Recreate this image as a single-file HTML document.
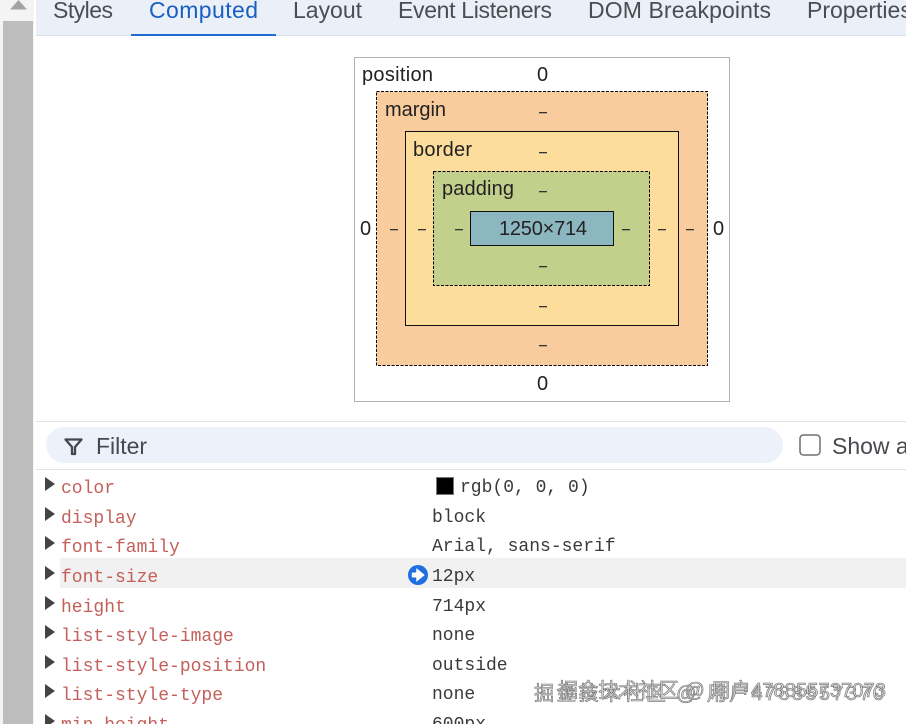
<!DOCTYPE html>
<html><head><meta charset="utf-8">
<style>
html,body{margin:0;padding:0;background:#fff;width:906px;height:724px;overflow:hidden}
svg{display:block}
.s{font-family:"Liberation Sans",sans-serif}
.tab{font-size:23px;fill:#4a4d52}
.box{font-size:20px;fill:#222}
.m{font-family:"Liberation Mono",monospace;font-size:18px}
.k{fill:#c4605a}
.v{fill:#3a3a3a}
.w{font-family:"Liberation Sans","Noto Sans CJK SC",sans-serif;font-size:20px;fill:#d8d8d8;stroke:#707070;stroke-width:.6}
</style></head><body>
<svg width="906" height="724" viewBox="0 0 906 724" xmlns="http://www.w3.org/2000/svg">
<rect width="906" height="724" fill="#fff"/>
<!-- scrollbar -->
<rect x="0" y="0" width="34" height="724" fill="#f4f4f4"/>
<rect x="3" y="21" width="30" height="703" fill="#bdbdbd"/>
<path d="M10 9.500 L18.500 0 L27 9.500Z" fill="#a3a3a3"/>
<rect x="34" y="0" width="2" height="724" fill="#fff"/>
<!-- tabs -->
<rect x="36" y="0" width="870" height="35" fill="#ebf0f8"/>
<rect x="36" y="35" width="870" height="1" fill="#d5dfee"/>
<rect x="131" y="34" width="145" height="2" fill="#1f69d3"/>
<g class="s tab">
<text x="53" y="18" textLength="60">Styles</text>
<text x="149" y="18" textLength="109" style="fill:#1a5fc0">Computed</text>
<text x="293" y="18" textLength="69">Layout</text>
<text x="398" y="18" textLength="154">Event Listeners</text>
<text x="588" y="18" textLength="183">DOM Breakpoints</text>
<text x="807" y="18">Properties</text>
</g>
<!-- box model -->
<rect x="354.500" y="57.500" width="375" height="344" fill="#fff" stroke="#666" stroke-dasharray="1 1"/>
<rect x="376.500" y="91.500" width="331" height="274" fill="#f9cc9d" stroke="#000" stroke-dasharray="3 1.500"/>
<rect x="405.500" y="131.500" width="273" height="194" fill="#fddd9b" stroke="#111"/>
<rect x="433.500" y="171.500" width="216" height="114" fill="#c3d08b" stroke="#000" stroke-dasharray="3 1.500"/>
<rect x="470.500" y="211.500" width="143" height="34" fill="#8cb6c0" stroke="#111"/>
<g class="s box">
<text x="362" y="81" textLength="71">position</text>
<text x="385" y="116" textLength="61">margin</text>
<text x="413" y="156" textLength="59">border</text>
<text x="442" y="195" textLength="72">padding</text>
<text x="499" y="235" textLength="88">1250×714</text>
<text x="537" y="81" textLength="11">0</text>
<text x="537" y="390" textLength="11">0</text>
<text x="360" y="235" textLength="11">0</text>
<text x="713" y="235" textLength="11">0</text>
</g>
<g fill="#333">
<rect x="539" y="112" width="8" height="1.300"/>
<rect x="539" y="152" width="8" height="1.300"/>
<rect x="539" y="191" width="8" height="1.300"/>
<rect x="539" y="266" width="8" height="1.300"/>
<rect x="539" y="306" width="8" height="1.300"/>
<rect x="539" y="345" width="8" height="1.300"/>
<rect x="390" y="229" width="8" height="1.300"/>
<rect x="418" y="229" width="8" height="1.300"/>
<rect x="455" y="229" width="8" height="1.300"/>
<rect x="622" y="229" width="8" height="1.300"/>
<rect x="658" y="229" width="8" height="1.300"/>
<rect x="686" y="229" width="8" height="1.300"/>
</g>
<!-- filter bar -->
<rect x="36" y="421" width="870" height="1" fill="#e0e3e8"/>
<rect x="46" y="427" width="737" height="36" rx="18" fill="#edf2fa"/>
<rect x="36" y="469" width="870" height="1" fill="#e0e3e8"/>
<path d="M65.500 439.500 H81.500 L75 447 V454 H72 V447 Z" fill="none" stroke="#43474c" stroke-width="2.300" stroke-linejoin="round"/>
<text class="s" x="96" y="454" font-size="23" fill="#46494e" textLength="51">Filter</text>
<rect x="800" y="435" width="20" height="20" rx="3.500" fill="#fff" stroke="#6d7074" stroke-width="1.500"/>
<text class="s" x="832" y="454" font-size="23" fill="#46494e">Show a</text>
<!-- highlighted row -->
<rect x="60" y="558" width="846" height="30" fill="#f1f1f1"/>
<circle cx="418" cy="575" r="10" fill="#1f6fe0"/>
<path d="M412 572.800 H416.500 V568.500 L424.500 575 L416.500 581.500 V577.200 H412 Z" fill="#fff" stroke="#fff" stroke-width=".5" stroke-linejoin="round"/>
<rect x="436.500" y="477.500" width="17" height="17" fill="#000" stroke="#777"/>
<!-- triangles -->
<g fill="#444">
<path d="M45 477 L55 484 L45 491Z"/>
<path d="M45 507 L55 514 L45 521Z"/>
<path d="M45 536 L55 543 L45 550Z"/>
<path d="M45 566 L55 573 L45 580Z"/>
<path d="M45 596 L55 603 L45 610Z"/>
<path d="M45 625 L55 632 L45 639Z"/>
<path d="M45 655 L55 662 L45 669Z"/>
<path d="M45 684 L55 691 L45 698Z"/>
<path d="M45 714 L55 721 L45 728Z"/>
</g>
<!-- rows -->
<g class="m k">
<text x="61" y="493">color</text>
<text x="61" y="523">display</text>
<text x="61" y="552">font-family</text>
<text x="61" y="582">font-size</text>
<text x="61" y="612">height</text>
<text x="61" y="641">list-style-image</text>
<text x="61" y="671">list-style-position</text>
<text x="61" y="700">list-style-type</text>
<text x="61" y="730">min-height</text>
</g>
<g class="m v">
<text x="460" y="492">rgb(0, 0, 0)</text>
<text x="432" y="522">block</text>
<text x="432" y="551">Arial, sans-serif</text>
<text x="432" y="581">12px</text>
<text x="432" y="611">714px</text>
<text x="432" y="640">none</text>
<text x="432" y="670">outside</text>
<text x="432" y="699">none</text>
<text x="432" y="729">600px</text>
</g>
<!-- watermark -->
<g class="w">
<text x="534" y="700" textLength="350">掘金技术社区 @ 用户4788557370</text>
<text x="558" y="697" textLength="328">掘金技术社区 @ 用户478855737073</text>
</g>
</svg>
</body></html>
